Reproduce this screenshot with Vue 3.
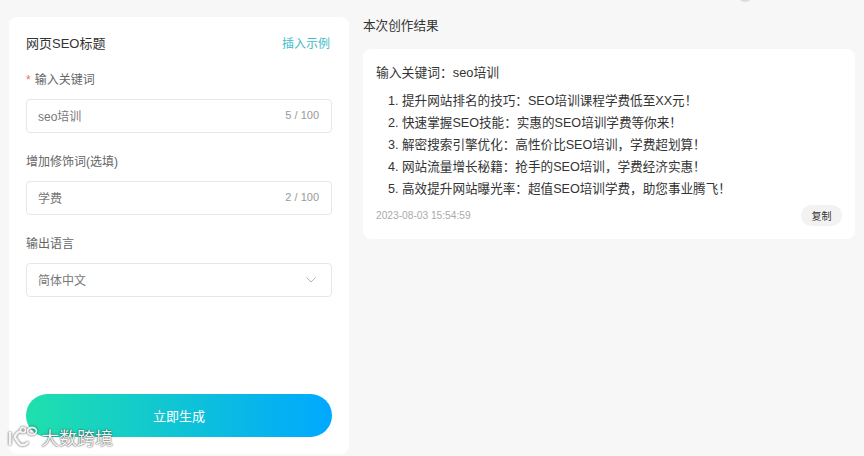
<script setup>
const colon = '\uFF1A'
const comma = '\uFF0C'
const bang = '\uFF01'
const fields = [
  { label: '输入关键词', required: true, value: 'seo培训', count: '5 / 100' },
  { label: '增加修饰词(选填)', required: false, value: '学费', count: '2 / 100' },
]
const keyword = `输入关键词${colon}seo培训`
const lines = [
  `提升网站排名的技巧${colon}SEO培训课程学费低至XX元${bang}`,
  `快速掌握SEO技能${colon}实惠的SEO培训学费等你来${bang}`,
  `解密搜索引擎优化${colon}高性价比SEO培训${comma}学费超划算${bang}`,
  `网站流量增长秘籍${colon}抢手的SEO培训${comma}学费经济实惠${bang}`,
  `高效提升网站曝光率${colon}超值SEO培训学费${comma}助您事业腾飞${bang}`,
]
</script>

<template>
  <div class="page">
    <span class="top-blob"></span>
    <section class="form-card">
      <header class="form-head">
        <h2>网页SEO标题</h2>
        <a class="sample">插入示例</a>
      </header>
      <div v-for="f in fields" :key="f.label" class="field">
        <label><span v-if="f.required" class="star">*</span>{{ f.label }}</label>
        <div class="box">
          <span class="value">{{ f.value }}</span>
          <span class="count">{{ f.count }}</span>
        </div>
      </div>
      <div class="field">
        <label>输出语言</label>
        <div class="box">
          <span class="value">简体中文</span>
          <svg class="chev" width="10" height="6" viewBox="0 0 10 6" fill="none">
            <path d="M.5.5L5 5 9.500.5" stroke="#b4b4b4" stroke-width="1" />
          </svg>
        </div>
      </div>
      <button class="go">立即生成</button>
    </section>

    <section class="result">
      <h3>本次创作结果</h3>
      <div class="result-card">
        <p class="kw">{{ keyword }}</p>
        <ol>
          <li v-for="l in lines" :key="l">{{ l }}</li>
        </ol>
        <div class="foot">
          <span class="time">2023-08-03 15:54:59</span>
          <button class="copy">复制</button>
        </div>
      </div>
    </section>

    <div class="mark">
      <svg width="32" height="24" viewBox="0 0 32 24" fill="none" stroke="#f4f4f4" stroke-width="2.6">
        <path d="M2 7v13" />
        <path d="M12 6C7 9 6 12 8 14c2 3 3 6 6 6 3 0 5-1 6-3" />
        <circle cx="15" cy="5" r="2.6" stroke-width="1.8" />
        <ellipse cx="24" cy="6" rx="4.500" ry="3.500" stroke-width="1.8" />
      </svg>
      <span>大数跨境</span>
    </div>
  </div>
</template>

<style>
html, body { margin: 0; background: #f7f7f7; }
</style>

<style scoped>
.page {
  position: relative;
  width: 864px;
  height: 456px;
  box-sizing: border-box;
  padding: 17px 9px 2px;
  display: flex;
  gap: 14px;
  overflow: hidden;
  background: #f7f7f7;
  font-family: "Liberation Sans", "Noto Sans CJK SC", sans-serif;
  color: #333;
}
.top-blob {
  position: absolute;
  left: 737px;
  top: -14px;
  width: 16px;
  height: 16px;
  border-radius: 50%;
  background: #dcdcdc;
}
.form-card {
  width: 340px;
  box-sizing: border-box;
  padding: 15px 17px 17px;
  background: #fff;
  border-radius: 8px;
  display: flex;
  flex-direction: column;
}
.form-head {
  display: flex;
  justify-content: space-between;
  align-items: center;
  height: 20px;
  margin-bottom: 17px;
}
h2 {
  margin: 0;
  font-size: 13px;
  font-weight: 400;
  color: #333;
}
.sample {
  font-size: 12px;
  color: #3fbcc8;
  margin-right: 2px;
}
.field { margin-bottom: 18px; }
label {
  display: block;
  height: 20px;
  line-height: 23px;
  margin-bottom: 10px;
  font-size: 12px;
  color: #666;
}
.star {
  color: #f56c6c;
  margin-right: 4px;
}
.box {
  height: 34px;
  box-sizing: border-box;
  border: 1px solid #e4e7ea;
  border-radius: 4px;
  padding: 0 12px 2px 11px;
  display: flex;
  align-items: center;
  justify-content: space-between;
}
.value {
  font-size: 12px;
  color: #777;
}
.count {
  font-size: 11px;
  color: #999;
}
.chev { margin-right: 3px; margin-top: 2px; }
.go {
  margin-top: auto;
  height: 43px;
  border: 0;
  border-radius: 22px;
  background: linear-gradient(90deg, #1fe0ac 0%, #00a8ff 100%);
  color: #fff;
  font: inherit;
  font-size: 13px;
}
.result {
  width: 492px;
  display: flex;
  flex-direction: column;
}
h3 {
  margin: 0;
  height: 18px;
  line-height: 19px;
  font-size: 12.6px;
  font-weight: 400;
  color: #333;
}
.result-card {
  margin-top: 14px;
  height: 190px;
  box-sizing: border-box;
  padding: 14px 13px 0 13px;
  background: #fff;
  border-radius: 8px;
}
.kw {
  margin: 0 0 7px;
  height: 20px;
  line-height: 20px;
  font-size: 12.8px;
  color: #333;
}
ol {
  margin: 0;
  padding: 0 0 0 26px;
  font-size: 12.6px;
  line-height: 22px;
  color: #333;
}
.foot {
  margin-top: 5px;
  display: flex;
  justify-content: space-between;
  align-items: center;
}
.time {
  font-size: 10.2px;
  color: #aaa;
}
.copy {
  width: 41px;
  height: 21px;
  border: 0;
  padding: 0;
  border-radius: 11px;
  background: #f2f2f2;
  color: #333;
  font: inherit;
  font-size: 10px;
}
.mark {
  position: absolute;
  left: 8px;
  top: 424px;
  display: flex;
  align-items: center;
  gap: 1px;
  color: #f4f4f4;
  font-size: 18px;
  text-shadow: 0 0 2px rgba(0, 0, 0, .6), 0 0 1px rgba(0, 0, 0, .5);
}
.mark svg { filter: drop-shadow(0 0 1px rgba(0, 0, 0, .7)); }
</style>
